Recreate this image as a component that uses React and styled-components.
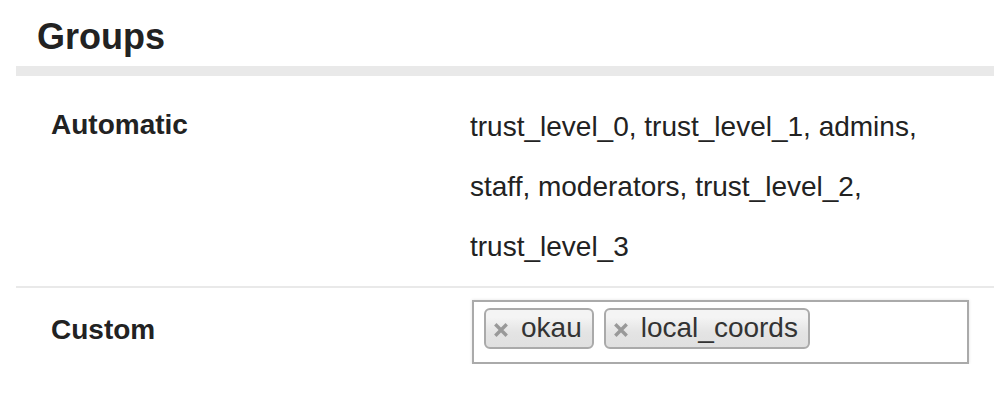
import styled, { createGlobalStyle } from "styled-components";

const GlobalStyle = createGlobalStyle`
  body {
    margin: 0;
    background: #ffffff;
    font-family: "Liberation Sans", Arial, Helvetica, sans-serif;
    color: #222222;
  }
`;

const Page = styled.div`
  padding-left: 16px;
`;

const Heading = styled.h2`
  margin: 0;
  padding: 17px 0 0 21px;
  font-size: 36px;
  line-height: 40px;
  font-weight: bold;
  color: #222222;
`;

const Bar = styled.div`
  margin-top: 9px;
  height: 10px;
  background: #e9e9e9;
`;

const Row = styled.div`
  display: flex;
  padding: ${(p) => p.$pad};
  padding-left: 35px;
  border-bottom: ${(p) => (p.$divider ? "2px solid #e9e9e9" : "none")};
`;

const Label = styled.div`
  width: 419px;
  flex-shrink: 0;
  font-size: 28px;
  font-weight: bold;
  line-height: ${(p) => p.$lh};
  padding-top: ${(p) => p.$top || "0"};
`;

const Value = styled.div`
  font-size: 28px;
  line-height: 60px;
  width: 460px;
`;

const Input = styled.div`
  margin-left: 2px;
  width: 497px;
  height: 64px;
  box-sizing: border-box;
  border: 2px solid #aaaaaa;
  box-shadow: 0 0 3px rgba(0, 0, 0, 0.12);
  padding: 6px 10px;
  display: flex;
  gap: 10px;
  align-items: flex-start;
`;

const Tag = styled.div`
  display: inline-flex;
  align-items: center;
  height: 41px;
  box-sizing: border-box;
  padding: 0 10px 2px 8px;
  border: 2px solid #aaaaaa;
  border-radius: 6px;
  background: linear-gradient(#f4f4f4 20%, #e4e4e4 60%, #e0e0e0);
  font-size: 28px;
  line-height: 32px;
  color: #333333;
`;

const Remove = styled.svg`
  width: 14px;
  height: 14px;
  margin: 5px 13px 0 0;
  flex-shrink: 0;
`;

const CloseIcon = () => (
  <Remove viewBox="0 0 14 14">
    <path
      d="M2.5 2.5 L11.5 11.5 M11.5 2.5 L2.5 11.5"
      stroke="#999999"
      strokeWidth="3.4"
      strokeLinecap="square"
    />
  </Remove>
);

const tags = ["okau", "local_coords"];

export default function App() {
  return (
    <>
      <GlobalStyle />
      <Page>
        <Heading>Groups</Heading>
        <Bar />
        <Row $pad="21px 0 9px" $divider>
          <Label $lh="56px">Automatic</Label>
          <Value>
            trust_level_0, trust_level_1, admins, staff, moderators,
            trust_level_2, trust_level_3
          </Value>
        </Row>
        <Row $pad="12px 0 0">
          <Label $lh="60px" $top="-2px">
            Custom
          </Label>
          <Input>
            {tags.map((t) => (
              <Tag key={t}>
                <CloseIcon />
                {t}
              </Tag>
            ))}
          </Input>
        </Row>
      </Page>
    </>
  );
}
